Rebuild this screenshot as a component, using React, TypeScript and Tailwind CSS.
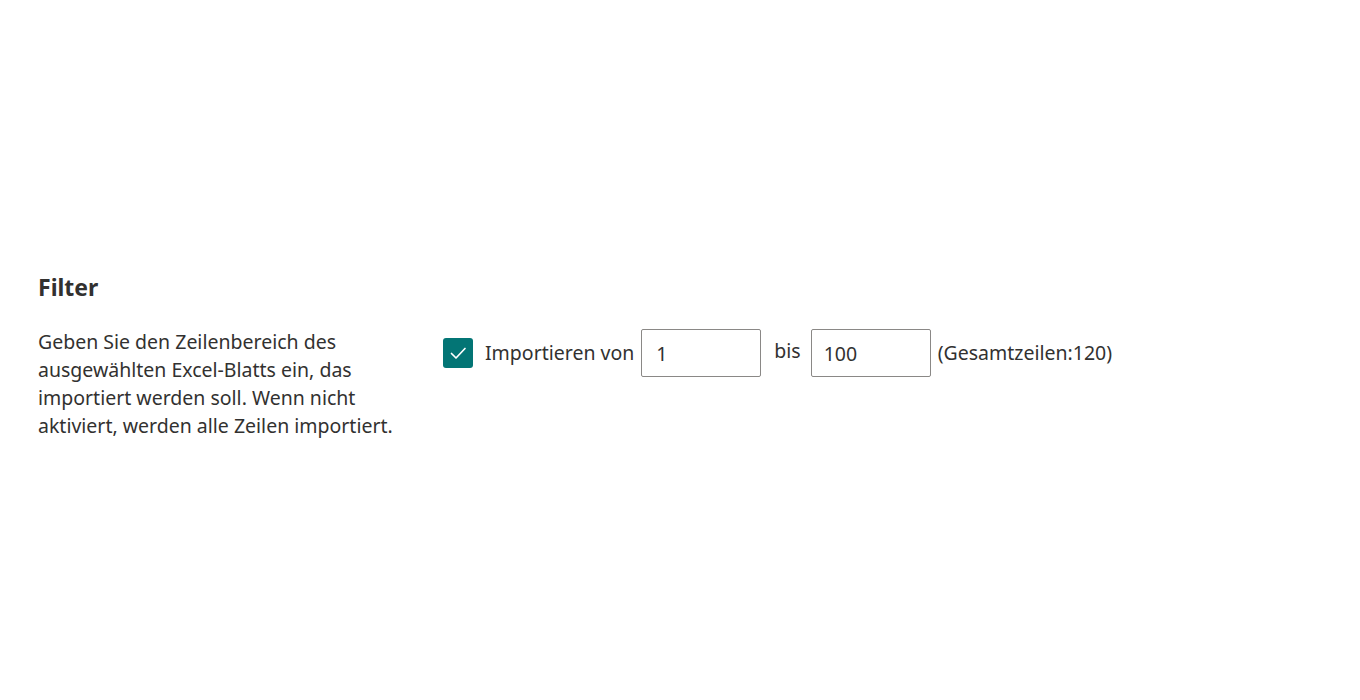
import React from "react";

const App = () => {
  return (
    <div
      className="min-h-[700px] bg-white text-[#323130] pt-[271px] px-[38px]"
      style={{ fontFamily: '"Noto Sans", "Open Sans", sans-serif' }}
    >
      <h2 className="text-[23px] leading-[32px] font-bold">Filter</h2>
      <div className="flex items-start mt-[25px]">
        <p className="w-[405px] pr-[10px] text-[19.5px] leading-[28px]">
          Geben Sie den Zeilenbereich des ausgewählten Excel-Blatts ein, das
          importiert werden soll. Wenn nicht aktiviert, werden alle Zeilen
          importiert.
        </p>
        <div className="flex items-center text-[19.5px] mt-[1px]">
          <div className="w-[30px] h-[30px] rounded-[3px] bg-[#037575] flex items-center justify-center">
            <svg width="22" height="22" viewBox="0 0 22 22" fill="none">
              <path
                d="M4.5 11.5 L9 16 L18 6.5"
                stroke="white"
                strokeWidth="1.7"
                strokeLinecap="round"
                strokeLinejoin="round"
              />
            </svg>
          </div>
          <span className="ml-[12px]">Importieren von</span>
          <input
            defaultValue="1"
            className="ml-[7px] w-[120px] h-[48px] border border-[#8a8886] rounded-[2px] px-[14px] text-[19.5px] outline-none"
          />
          <span className="ml-[13px] mr-[10px] -mt-[4px]">bis</span>
          <input
            defaultValue="100"
            className="w-[120px] h-[48px] border border-[#8a8886] rounded-[2px] px-[12px] text-[19.5px] outline-none"
          />
          <span className="ml-[7px]">(Gesamtzeilen:120)</span>
        </div>
      </div>
    </div>
  );
};

export default App;
